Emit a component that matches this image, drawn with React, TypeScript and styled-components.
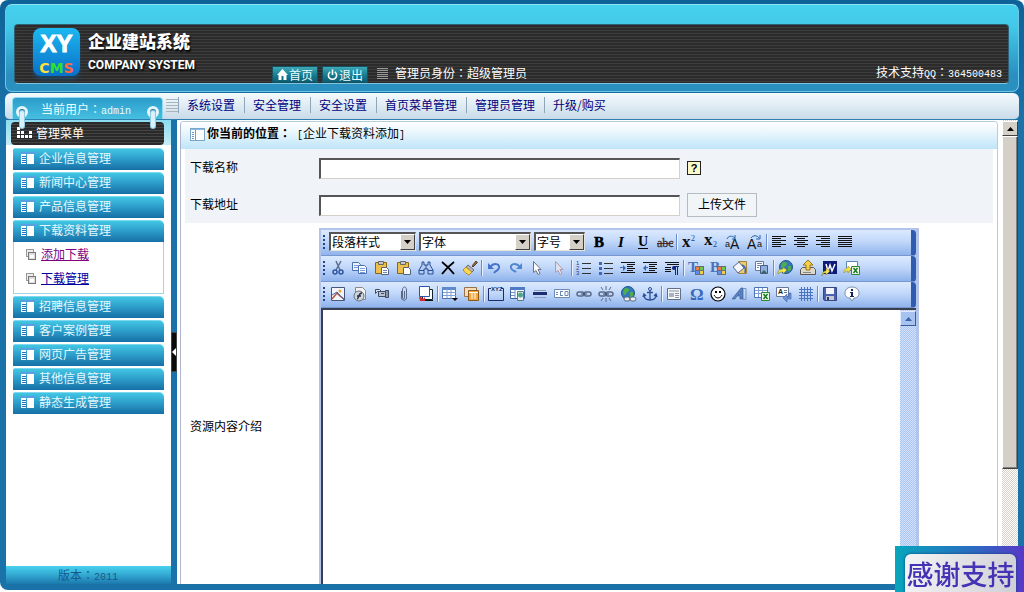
import React from "react";
import styled, { createGlobalStyle, css } from "styled-components";

const GlobalStyle = createGlobalStyle`
  * { box-sizing: border-box; }
  body {
    margin: 0;
    background: #fff;
    font: 12px/16px "Noto Sans CJK SC", sans-serif;
    color: #000;
  }
  button, input, select { font: inherit; color: inherit; }
`;

/* ---------- frame ---------- */

const Page = styled.div`
  display: flex;
  flex-direction: column;
  height: 100vh;
  padding-bottom: 2px;
`;

const Frame = styled.div`
  flex: 1;
  min-height: 0;
  display: flex;
  flex-direction: column;
  padding: 4px 5px 6px;
  border-radius: 8px;
  background: linear-gradient(#0e6298, #1a72a8 120px);
`;

const Header = styled.header`
  height: 88px;
  padding: 19px 9px 8px 8px;
  border: 1px solid #6cc6e6;
  border-top-color: #8fe2f4;
  border-radius: 7px;
  background: linear-gradient(#45d1ee, #43c8e8 22px, #2a8fc0 70px, #2a90bf);
`;

const Banner = styled.div`
  display: flex;
  height: 60px;
  padding: 0 6px 0 18px;
  border: 1px solid #2f5f72;
  border-bottom-color: #7cc6e2;
  border-radius: 4px;
  background: repeating-linear-gradient(#2b2b2b 0 2px, #3d3d3d 2px 3px);
  color: #fff;
`;

const Logo = styled.div`
  display: flex;
  flex-direction: column;
  align-items: center;
  width: 47px;
  height: 48px;
  margin-top: 3px;
  border-radius: 8px;
  background: linear-gradient(#1cb8f0, #0a6fc8);
  box-shadow: 0 4px 4px rgba(20, 90, 140, 0.5);
`;

const LogoTop = styled.span`
  font: 900 24px/32px "Liberation Sans", sans-serif;
  -webkit-text-stroke: 1px #fff;
`;

const LogoLetter = styled.span<{ $color: string }>`
  font: bold 14px/14px "DejaVu Sans", sans-serif;
  color: ${(p) => p.$color};
`;

const Brand = styled.div`
  width: 192px;
  padding: 5px 0 0 8px;
  white-space: nowrap;
  text-shadow: 1px 2px 2px #000;
`;

const BrandName = styled.div`
  font-size: 17px;
  font-weight: 900;
  line-height: 22px;
`;

const BrandSub = styled.div`
  font: bold 12px/26px Roboto, sans-serif;
`;

const Status = styled.div`
  flex: 1;
  display: flex;
  align-items: flex-end;
  gap: 4px;
`;

const HeadButton = styled.button`
  display: flex;
  align-items: center;
  gap: 1px;
  width: 46px;
  height: 17px;
  padding: 0 4px;
  border: 1px solid #17505e;
  background: linear-gradient(#3da9b8, #14788c 60%, #0c5c72);
  color: #e8fbff;
  white-space: nowrap;
`;

const Role = styled.span`
  display: flex;
  align-items: center;
  gap: 7px;
  margin-left: 5px;
  padding-bottom: 2px;
`;

const Support = styled.span`
  align-self: flex-end;
`;

const Latin = styled.span`
  font: 10px/16px "Liberation Mono", monospace;
`;

const Colon = styled.span`
  font-family: "Noto Sans CJK TC", sans-serif;
`;

const Nav = styled.nav`
  display: flex;
  height: 27px;
  margin-top: 1px;
  padding: 4px 0 0 7px;
  border-bottom: 1px solid #2f7fae;
  border-radius: 6px 6px 5px 5px;
  background: linear-gradient(#f4fafe, #dbe8f1 60%, #c9dae8);
`;

const UserTab = styled.div`
  position: relative;
  width: 151px;
  height: 22px;
  padding: 3px 0 0 28px;
  border: 1px solid #8fdcf0;
  border-bottom: 0;
  border-radius: 4px 4px 0 0;
  background: linear-gradient(#2b9ccb, #46bfe0);
  color: #eafcff;
`;

const Ring = styled.svg<{ $side: "left" | "right" }>`
  position: absolute;
  z-index: 1;
  top: 8px;
  ${(p) => p.$side}: 3px;
`;

const NavMark = styled.span`
  width: 12px;
  height: 14px;
  margin: 2px 0 0 3px;
  background: repeating-linear-gradient(#aab4bc 0 1px, transparent 1px 3px);
`;

const NavLink = styled.a`
  height: 16px;
  padding: 0 9px 0 8px;
  border-left: 1px solid #8ea6b8;
  color: #00007c;
  text-decoration: none;
  white-space: nowrap;
`;

const Body = styled.div`
  flex: 1;
  min-height: 0;
  display: flex;
  padding: 0 1px;
`;

/* ---------- sidebar ---------- */

const Sidebar = styled.aside`
  display: flex;
  flex-direction: column;
  width: 165px;
  background: #fff;
`;

const SideHead = styled.h2`
  margin: 0;
  padding: 2px 7px 0 5px;
  background: linear-gradient(#8adcf0, #c8ecf7);
  font-size: 12px;
  font-weight: normal;
`;

const SideTitle = styled.span`
  display: flex;
  align-items: center;
  gap: 4px;
  height: 23px;
  padding: 0 0 2px 6px;
  border-radius: 4px;
  background: repeating-linear-gradient(#2a2a2a 0 2px, #444 2px 3px);
  color: #fff;
`;

const Menu = styled.div`
  flex: 1;
  display: flex;
  flex-direction: column;
  gap: 2px;
  padding: 3px 7px 0;
`;

const MenuItem = styled.button`
  display: flex;
  align-items: center;
  gap: 4px;
  height: 22px;
  padding: 0 8px 3px;
  border: 0;
  border-top: 1px solid #7fd8ec;
  border-radius: 2px 5px 0 0;
  background: linear-gradient(#42c6e4, #2d9fcb 45%, #166fa6);
  color: #e2f8ff;
`;

const SubMenu = styled.div`
  display: flex;
  flex-direction: column;
  gap: 8px;
  height: 52px;
  margin-top: -2px;
  padding: 4px 0 0 12px;
  border: 1px solid #9ad6e8;
  border-top: 0;
`;

const SubItem = styled.span`
  display: flex;
  align-items: center;
  gap: 5px;
`;

const SubLink = styled.a<{ $visited?: boolean }>`
  color: ${(p) => (p.$visited ? "#800080" : "#0000a0")};
`;

const Version = styled.footer`
  height: 18px;
  padding-left: 52px;
  background: linear-gradient(#48d2ef, #2f9fcb 60%, #1b78ae);
  color: #155a88;
  line-height: 18px;
`;

const Splitter = styled.div`
  display: flex;
  align-items: center;
  width: 6px;
`;

const SplitHandle = styled.button`
  display: grid;
  place-items: center;
  width: 6px;
  height: 40px;
  padding: 0;
  border: 1px solid #444;
  background: #0a0a0a;
`;

/* ---------- content ---------- */

const Content = styled.main`
  flex: 1;
  min-width: 0;
  display: flex;
  background: #fff;
`;

const Panel = styled.section`
  flex: 1;
  min-width: 0;
  margin: 1px 4px 0 3px;
  overflow: hidden;
  border: 1px solid #b4cfdc;
  border-left-color: #b0b4cc;
  border-bottom: 0;
  border-radius: 4px 4px 0 0;
`;

const PanelHead = styled.h1`
  display: flex;
  align-items: center;
  gap: 2px;
  height: 27px;
  margin: 0;
  padding: 0 9px 3px;
  background: linear-gradient(#fff, #e8f6fd 40%, #bfe4f8);
  font-size: 12px;
`;

const Place = styled.span`
  margin-left: 6px;
  font-weight: normal;
`;

const Row = styled.div<{ $editor?: boolean }>`
  display: flex;
  align-items: center;
  gap: 7px;
  height: 37px;
  margin: 0 4px;
  padding: 1px 0 0 5px;
  background: #f0f4f8;
  ${(p) =>
    p.$editor &&
    css`
      height: auto;
      padding-top: 5px;
      background: #fff;
    `}
`;

const Label = styled.label`
  width: 122px;
  padding-bottom: 2px;
`;

const TextInput = styled.input`
  width: 361px;
  height: 21px;
  border: 1px solid;
  border-width: 2px 1px 1px 2px;
  border-color: #555 #d4d0c8 #d4d0c8 #555;
  background: #fff;
`;

const Help = styled.button`
  width: 14px;
  height: 14px;
  padding: 0;
  border: 1px solid #222;
  background: #fdf8c8;
  font: bold 11px/12px "Liberation Sans", sans-serif;
`;

const Upload = styled.button`
  width: 70px;
  height: 24px;
  padding: 0 0 2px;
  border: 1px solid #b4bcc2;
  background: #f2f5f8;
`;

/* ---------- scrollbars ---------- */

type Tone = { $blue?: boolean };

const Track = styled.div<Tone>`
  display: flex;
  flex-direction: column;
  width: 16px;
  padding-top: 1px;
  background: ${(p) =>
    p.$blue
      ? "repeating-conic-gradient(#a9c4f2 0 25%, #d4e2fa 0 50%) 0 0 / 2px 2px"
      : "repeating-conic-gradient(#d4d0c8 0 25%, #fff 0 50%) 0 0 / 2px 2px"};
`;

const ScrollButton = styled.button<Tone>`
  display: grid;
  place-items: center;
  width: 16px;
  height: 15px;
  padding: 0;
  border: 1px solid;
  border-color: ${(p) => (p.$blue ? "#e0ebfd #3c5a9c #3c5a9c #e0ebfd" : "#fff #404040 #404040 #fff")};
  background: ${(p) => (p.$blue ? "#a6c3f2" : "#d4d0c8")};
`;

const Thumb = styled.div`
  width: 16px;
  height: 72%;
  border: 1px solid;
  border-color: #fff #404040 #404040 #fff;
  background: #d4d0c8;
  box-shadow: inset -1px -1px #808080;
`;

/* ---------- editor ---------- */

const Editor = styled.div`
  display: flex;
  flex-direction: column;
  width: 600px;
  height: 398px;
  padding: 2px 3px 0 2px;
  background: #b3c4ea;
`;

const Toolbar = styled.div`
  display: flex;
  align-items: center;
  height: 26px;
  padding: 0 0 2px 1px;
  border-right: 5px solid #2f5cae;
  border-bottom: 1px solid #7896cf;
  border-radius: 0 4px 4px 0;
  background: linear-gradient(#dbe9fe, #c2d8fa 45%, #8fb3ec);
`;

const Grip = styled.span<{ $wide?: boolean }>`
  width: 2px;
  height: 14px;
  margin-left: 1px;
  margin-right: ${(p) => (p.$wide ? 4 : 2)}px;
  background: repeating-linear-gradient(#27418a 0 2px, transparent 2px 4px);
`;

const Divider = styled.span`
  width: 2px;
  height: 16px;
  border-left: 1px solid #6a8ccb;
  border-right: 1px solid #eef4ff;
`;

const Tool = styled.button`
  display: grid;
  place-items: center;
  width: 22px;
  height: 22px;
  padding: 0;
  border: 0;
  background: none;
`;

const SelectBox = styled.span<{ $w: number }>`
  position: relative;
  display: flex;
  width: ${(p) => p.$w}px;
  margin-right: 3px;
`;

const Select = styled.select`
  appearance: none;
  width: 100%;
  height: 19px;
  padding: 0 0 0 1px;
  border: 1px solid;
  border-width: 2px 1px 1px 2px;
  border-color: #555 #e6e2dc #e6e2dc #555;
  border-radius: 0;
  background: #fff;
  line-height: 16px;
`;

const SelectArrow = styled.span`
  position: absolute;
  top: 2px;
  right: 1px;
  display: grid;
  place-items: center;
  width: 15px;
  height: 16px;
  border: 1px solid;
  border-color: #fff #404040 #404040 #fff;
  background: #d4d0c8;
  pointer-events: none;
`;

const EditPane = styled.div`
  flex: 1;
  display: flex;
  border: solid #3a3f50;
  border-width: 2px 0 0 2px;
  background: #fff;
`;

const EditArea = styled.textarea`
  flex: 1;
  border: 0;
  padding: 0;
  resize: none;
  overflow: hidden;
  background: #fff;
`;

/* ---------- badge ---------- */

const Badge = styled.div`
  position: fixed;
  right: 0;
  bottom: 0;
  width: 129px;
  height: 46px;
  padding: 8px 8px 0 10px;
  background: linear-gradient(90deg, #08a6bc, #2a6cc0 60%, #5838c8);
`;

const BadgeText = styled.div`
  height: 38px;
  border-radius: 6px 6px 0 0;
  background: linear-gradient(100deg, #f4f4f6, #cfcfd6);
  box-shadow: 0 0 3px #123c78;
  color: #4433b4;
  font-size: 27px;
  font-weight: 500;
  line-height: 39px;
  text-align: center;
  white-space: nowrap;
`;

/* ---------- drawings ---------- */

const Glyph = styled.svg`
  overflow: visible;
`;

const Icon = ({ children }: { children: React.ReactNode }) => (
  <Glyph width="16" height="16" viewBox="0 0 16 16" fill="none" aria-hidden="true">
    {children}
  </Glyph>
);

const Arrow = ({ down, color = "#000" }: { down?: boolean; color?: string }) => (
  <svg width="7" height="4" viewBox="0 0 7 4" aria-hidden="true">
    <path d={down ? "M0 0h7L3.5 4z" : "M0 4h7L3.5 0z"} fill={color} />
  </svg>
);

const PageIcon = () => (
  <svg width="14" height="12" viewBox="0 0 14 12" shapeRendering="crispEdges" aria-hidden="true">
    <path d="M0 0h14v2H0z" fill="#5a9fe0" />
    <path d="M0 2h5v10H0zM6 2h7v10H6z" fill="#fff" />
    <path d="M1 4.500h4M1 6.500h4M1 8.500h4M1 10.500h4" stroke="#2a74b8" />
  </svg>
);

const HeadIcon = () => (
  <svg width="15" height="13" viewBox="0 0 15 13" shapeRendering="crispEdges" aria-hidden="true">
    <path d="M.5 .5h14v12H.5z" fill="#fff" stroke="#7aa4c8" />
    <path d="M1 1h13v1H1z" fill="#8abbe6" />
    <path d="M5.500 2v10M2 4.500h2M2 6.500h2M2 8.500h2M2 10.500h2" stroke="#6a9cc8" />
  </svg>
);

const CopyIcon = () => (
  <svg width="10" height="11" viewBox="0 0 10 11" shapeRendering="crispEdges" aria-hidden="true">
    <path d="M.5 .5h7v7h-7z" fill="#eee" stroke="#999" />
    <path d="M2.500 3.500h7v7h-7z" fill="#ddd" stroke="#777" />
    <path d="M4 6h4v3H4z" fill="#fff" />
  </svg>
);

const RingDrawing = ({ side }: { side: "left" | "right" }) => (
  <Ring $side={side} width="12" height="24" viewBox="0 0 12 24" aria-hidden="true">
    <circle cx="6" cy="6" r="4.500" fill="#1f6f9c" stroke="#e4f5fb" strokeWidth="3" />
    <path d="M6 7v13" stroke="#8fcbe6" strokeWidth="6" strokeLinecap="round" />
    <path d="M6 7v13" stroke="#d9f1fa" strokeWidth="4" strokeLinecap="round" />
  </Ring>
);

const serif = '"Liberation Serif", serif';
const sans = '"Liberation Sans", sans-serif';
const navy = "#1c3f8c";

const lines = (rows: string) => <path d={rows} stroke="#111" shapeRendering="crispEdges" />;
const clipboard = (
  <>
    <path d="M1.500 2.500h11v11h-11z" fill="#ecc04a" stroke="#8a6418" />
    <path d="M4.500 1.500h5v3h-5z" fill="#c8c8c8" stroke="#666" />
    <path d="M7.500 7.500h5l2 2v5h-7z" fill="#fff" stroke="#55627f" />
  </>
);
const excel = (
  <>
    <path d="M7.500 6.500h8v8h-8z" fill="#e9f7e4" stroke="#2b8a34" />
    <path d="M9.500 8l4 5M13.500 8l-4 5" stroke="#1e7a28" strokeWidth="1.500" />
  </>
);
const swatch = (
  <g shapeRendering="crispEdges">
    <path d="M7 6h9v9H7z" fill="#6e6a6e" />
    <path d="M8 7h3v3H8z" fill="#ee7a50" />
    <path d="M12 7h3v3h-3z" fill="#6cc850" />
    <path d="M8 11h3v3H8z" fill="#5a8ef0" />
    <path d="M12 11h3v3h-3z" fill="#f0d04a" />
  </g>
);
const chain = (
  <>
    <rect x="1" y="6" width="7" height="4" rx="2" stroke="#5a6a88" strokeWidth="1.500" />
    <rect x="8" y="6" width="7" height="4" rx="2" stroke="#5a6a88" strokeWidth="1.500" />
    <path d="M5 8h6" stroke="#33415e" />
  </>
);
const globe = (
  <>
    <circle cx="8" cy="7" r="6.500" fill="#3278c0" stroke="#1f5484" />
    <path d="M4 3c2-2 5-1 5 1S6 6 6 8s-2 1-3-1zM10 6c2-1 4 0 3 3s-3 3-3 1z" fill="#4fae4a" />
  </>
);

const icons: Record<string, React.ReactNode> = {
  粗体: <text x="3" y="13" fontFamily={serif} fontSize="15" fontWeight="900" fill="#000" stroke="#000" strokeWidth=".5">B</text>,
  斜体: <text x="5" y="13" fontFamily={serif} fontSize="15" fontWeight="bold" fontStyle="italic" fill="#000">I</text>,
  下划线: (
    <>
      <text x="3" y="12" fontFamily={serif} fontSize="14" fontWeight="bold" fill="#000">U</text>
      <path d="M3 14.500h10" stroke="#000" />
    </>
  ),
  删除线: (
    <>
      <text x="0" y="13" fontFamily={serif} fontSize="12" fill="#333" stroke="#333" strokeWidth=".3">abc</text>
      <path d="M0 9.500h16" stroke="#5a2020" />
    </>
  ),
  上标: (
    <>
      <text x="1" y="13" fontFamily={serif} fontSize="17" fontWeight="bold" fill="#111">x</text>
      <text x="10" y="7" fontFamily={serif} fontSize="8" fill={navy}>2</text>
    </>
  ),
  下标: (
    <>
      <text x="1" y="11" fontFamily={serif} fontSize="17" fontWeight="bold" fill="#111">x</text>
      <text x="10" y="13" fontFamily={serif} fontSize="8" fill={navy}>2</text>
    </>
  ),
  大写: (
    <>
      <text x="0" y="13" fontFamily={sans} fontSize="9" fill="#111">a</text>
      <text x="5" y="15" fontFamily={sans} fontSize="14" fill="#111">A</text>
      <path d="M2 5c1-3 5-4 8-1M10 1v4H7" stroke="#2462a8" />
    </>
  ),
  小写: (
    <>
      <text x="0" y="15" fontFamily={sans} fontSize="14" fill="#111">A</text>
      <text x="10" y="13" fontFamily={sans} fontSize="9" fill="#111">a</text>
      <path d="M4 4c2-3 6-3 8 0M13 1v4H9" stroke="#2462a8" />
    </>
  ),
  左对齐: lines("M1 2.500h14M1 4.500h9M1 6.500h14M1 8.500h9M1 10.500h14M1 12.500h9"),
  居中: lines("M1 2.500h14M4 4.500h8M1 6.500h14M4 8.500h8M1 10.500h14M4 12.500h8"),
  右对齐: lines("M1 2.500h14M6 4.500h9M1 6.500h14M6 8.500h9M1 10.500h14M6 12.500h9"),
  两端对齐: lines("M1 2.500h14M1 4.500h14M1 6.500h14M1 8.500h14M1 10.500h14M1 12.500h14"),

  剪切: (
    <>
      <path d="M6 1l4 9M11 1L6 10" stroke="#5c6f92" strokeWidth="1.500" />
      <circle cx="5" cy="12" r="2" stroke="#2f55a4" strokeWidth="1.500" />
      <circle cx="11" cy="12" r="2" stroke="#2f55a4" strokeWidth="1.500" />
    </>
  ),
  复制: (
    <>
      <path d="M.5 2.500h6l2 2v6h-8z" fill="#eef4ff" stroke="#4a6eb4" />
      <path d="M6.500 5.500h6l2 2v6h-8z" fill="#fff" stroke="#4a6eb4" />
      <path d="M2 5.500h4M2 7.500h4M8 8.500h5M8 10.500h5M8 12.500h5" stroke="#7c9cd6" />
    </>
  ),
  粘贴: (
    <>
      {clipboard}
      <path d="M9 10.500h4M9 12.500h4" stroke="#7088b8" />
    </>
  ),
  粘贴文本: clipboard,
  查找: (
    <>
      <path d="M4 2h2v3h4V2h2v3l3 5v4h-5v-5H6v5H1v-4l3-5z" fill="#b7cdf0" stroke="#274f98" />
      <path d="M1 10.500h5M10 10.500h5M8 5v4" stroke="#274f98" />
    </>
  ),
  删除: <path d="M2 2c4 3 8 7 12 12M14 2C10 5 5 10 2 14" stroke="#000" strokeWidth="1.800" />,
  格式刷: (
    <>
      <path d="M10 6l4-5 1.500 1.500L11 7z" fill="#8a6a4a" stroke="#5a4028" />
      <path d="M6 5l6 5-2 2-6-5z" fill="#b9b9c4" stroke="#6a6a78" />
      <path d="M4 7l6 5-3 3c-2-1-5-3-6-5z" fill="#f7d65a" stroke="#b88a20" />
    </>
  ),
  撤销: (
    <>
      <path d="M4 7c4-5 10-3 9 1-1 3-4 3-5 5" stroke="#4574c8" strokeWidth="2" />
      <path d="M2 3v6h6z" fill="#4574c8" />
    </>
  ),
  重做: (
    <>
      <path d="M12 7C8 2 2 4 3 8c1 3 4 3 5 4" stroke="#4f86d0" strokeWidth="2" />
      <path d="M14 3v6H8z" fill="#4f86d0" />
    </>
  ),
  全选: <path d="M3.500 1.500v11l2.500-2 2 4 2-1-2-4h3z" fill="#fff" stroke="#6b7486" />,
  取消选择: <path d="M3.500 1.500v11l2.500-2 2 4 2-1-2-4h3z" fill="#dde2f2" stroke="#b39aa8" />,
  编号: (
    <>
      <path d="M6 3.500h9M6 8.500h9M6 13.500h9" stroke="#333" />
      <text x="0" y="5" fontFamily={sans} fontSize="6" fill={navy}>1</text>
      <text x="0" y="10" fontFamily={sans} fontSize="6" fill={navy}>2</text>
      <text x="0" y="15" fontFamily={sans} fontSize="6" fill={navy}>3</text>
    </>
  ),
  项目符号: (
    <>
      <path d="M6 3.500h9M6 8.500h9M6 13.500h9" stroke="#333" />
      <path d="M1 2h3v3H1zM1 7h3v3H1zM1 12h3v3H1z" fill="#3b68b8" />
    </>
  ),
  增加缩进: (
    <>
      {lines("M1 2.500h14M7 4.500h8M7 6.500h6M7 8.500h8M7 10.500h6M1 12.500h14")}
      <path d="M0 7h3V5l3 3-3 3V8H0z" fill="#3b68b8" />
    </>
  ),
  减少缩进: (
    <>
      {lines("M1 2.500h14M7 4.500h8M7 6.500h6M7 8.500h8M7 10.500h6M1 12.500h14")}
      <path d="M6 7H4V5L1 8l3 3V8h2z" fill="#3b68b8" />
    </>
  ),
  段落: (
    <>
      {lines("M1 2.500h14M3 4.500h12M1 7.500h6M1 9.500h6M1 11.500h6")}
      <path d="M13.500 6v9M11.500 6v9M10 6.500h5" stroke="#16247c" />
      <circle cx="10" cy="8" r="2" fill="#16247c" />
    </>
  ),
  文字颜色: (
    <>
      <text x="0" y="12" fontFamily={serif} fontSize="15" fontWeight="bold" fill="#4a72b8">T</text>
      {swatch}
    </>
  ),
  背景颜色: (
    <>
      <text x="0" y="12" fontFamily={serif} fontSize="15" fontWeight="bold" fill="#4a72b8">B</text>
      {swatch}
    </>
  ),
  填充: (
    <>
      <path d="M6.500 1.500h8v12h-8z" fill="#f0cc68" stroke="#9f8440" />
      <path d="M1 7l6-5 5 6-6 5z" fill="#f4f6fa" stroke="#5a6a88" />
      <path d="M10 5c3 1 4 4 3 8" stroke="#3b68b8" strokeWidth="1.500" />
    </>
  ),
  图片背景: (
    <>
      <path d="M1.500 1.500h8v9h-8z" fill="#fff" stroke="#6a7896" />
      <path d="M6.500 5.500h7v8h-7z" fill="#8fb0de" stroke="#455c88" />
      <path d="M3 3.500h5M3 5.500h4M3 7.500h2" stroke="#6f86b4" />
      <path d="M7 13l3-3 3 3z" fill="#3a6a54" />
    </>
  ),
  网页: (
    <>
      {globe}
      <path d="M0 14c0-4 2-5 5-5V7l4 3-4 4v-2c-2 0-3 0-5 2z" fill="#f6e84a" stroke="#6a6a20" strokeWidth=".5" />
    </>
  ),
  上传: (
    <>
      <path d="M.5 9.500l2-2h11l2 2v5H.5z" fill="#dcd8cc" stroke="#555" />
      <path d="M8 0l5 5h-3v5H6V5H3z" fill="#f7cf4a" stroke="#9a7410" />
      <path d="M3 12.500h8" stroke="#888" />
    </>
  ),
  导入文档: (
    <>
      <path d="M1 1h14v13H1z" fill="#0d1a78" />
      <path d="M4 4l2 7 2-6 2 6 3-7" stroke="#fff" strokeWidth="1.500" />
      <path d="M0 16c0-4 2-5 4-5V8l4 3-4 4v-2c-2 0-3 0-4 3z" fill="#f6e84a" stroke="#6a6a20" strokeWidth=".5" />
    </>
  ),
  导入表格: (
    <>
      <path d="M2.500 1.500h11v9h-11z" fill="#fff" stroke="#5c86b4" />
      {excel}
      <path d="M0 13c0-4 2-5 4-5V6l3 3-3 4v-2c-2 0-3 0-4 2z" fill="#f6e84a" stroke="#8a8420" strokeWidth=".5" />
    </>
  ),

  图片: (
    <>
      <path d="M1.500 1.500h13v13h-13z" fill="#f2f6fc" stroke="#46577c" />
      <path d="M2 13l5-6 3 3 4 3" stroke="#b8543c" strokeWidth="1.500" />
      <circle cx="10" cy="5" r="1.500" fill="#e8a040" />
      <path d="M2 9l5-3 7 8" stroke="#3f68ac" />
    </>
  ),
  动画: (
    <>
      <path d="M3.500 1.500h7l3 3v9h-10z" fill="#f3f3f3" stroke="#888" />
      <circle cx="7" cy="10" r="5" fill="#d0d4dc" stroke="#68707e" />
      <path d="M5 13c2 0 1-6 5-6M5 10h4" stroke="#2b3444" strokeWidth="1.500" />
    </>
  ),
  视频: (
    <>
      <path d="M4.500 5.500h7v5h-7z" fill="#b8c2d2" stroke="#404c62" />
      <path d="M1.500 3.500h4l2 2h-4l-2 2z" fill="#dde3ee" stroke="#404c62" />
      <path d="M7 7.500h3" stroke="#404c62" />
      <path d="M11.500 4.500h3v7h-3z" fill="#8a96aa" stroke="#404c62" />
    </>
  ),
  附件: <path d="M5.500 5v7c0 3 5 3 5 0V4c0-4-4-4-4 0v8c0 1 2 1 2 0V5" stroke="#5a6a88" />,
  插入层: (
    <>
      <path d="M4.500 3.500h10v10h-10z" fill="#fff" stroke="#123" />
      <path d="M1.500 .5h10v10h-10z" fill="#fff" stroke="#2b56a8" />
      <path d="M1 11h2l2 2 2-2v4H2z" fill="#d42a2a" />
      <path d="M7 14.500h8" stroke="#111" />
    </>
  ),
  表格: (
    <>
      <path d="M.5 1.500h13v11H.5z" fill="#fff" stroke="#4c73b4" />
      <path d="M0 1h14v3H0z" fill="#5c88cc" />
      <path d="M1 6.500h13M1 9.500h13M5 3v9M9 3v9" stroke="#7ea0d8" />
      <path d="M10 12h6l-3 3z" fill="#000" />
    </>
  ),
  表格属性: (
    <>
      <path d="M.5 1.500h12v9H.5z" fill="#f6dcb8" stroke="#9a7448" />
      <path d="M4.500 4.500h10v10h-10z" fill="#f9a838" stroke="#8a5a1c" />
      <path d="M8 6v7M11 6v7M5 6.500h9" stroke="#fff" />
    </>
  ),
  容器: (
    <>
      <path d="M3 2.500H.5v12h15v-12H13" stroke="#1b2d66" />
      <text x="3" y="5" fontFamily={sans} fontSize="6" fontWeight="bold" fill="#1b2d66">XYZ</text>
    </>
  ),
  框架: (
    <>
      <path d="M.5 1.500h14v11H.5z" fill="#fff" stroke="#3f62a4" />
      <path d="M0 1h15v3H0z" fill="#4f7ac4" />
      <path d="M5 4v8M1 6.500h4M1 9.500h4" stroke="#6f92cf" />
      <path d="M7.500 5.500h6v9h-6z" fill="#e8f0f0" stroke="#5a7a84" />
      <circle cx="10.500" cy="9" r="2.500" fill="#4fa78a" />
    </>
  ),
  水平线: (
    <>
      <path d="M2 4.500h12M2 11.500h12" stroke="#8c9ab8" />
      <path d="M1 6h14v3H1z" fill="#1d2f6c" />
    </>
  ),
  输入框: (
    <>
      <path d="M.5 3.500h15v8H.5z" fill="#fff" stroke="#6c8ab8" />
      <path d="M2 6.500h2M2 8.500h2M6.500 6v3M6 5.500h3M6 9.500h3M11 5.500h3v4h-3z" stroke="#6c8ab8" />
    </>
  ),
  链接: chain,
  取消链接: (
    <>
      {chain}
      <path d="M8 0v4M8 12v4M3 1l2 3M13 1l-2 3M3 15l2-3M13 15l-2-3" stroke="#5a6a88" />
    </>
  ),
  网址: (
    <>
      {globe}
      <rect x="4" y="11" width="6" height="4" rx="2" fill="#eee" stroke="#5a6a88" />
      <rect x="10" y="11" width="6" height="4" rx="2" fill="#eee" stroke="#5a6a88" />
    </>
  ),
  锚点: (
    <>
      <circle cx="8" cy="3" r="1.500" stroke="#2b4f98" />
      <path d="M8 4v10M5 6.500h6M2 9c0 4 3 5 6 5s6-1 6-5M1 11l1-3 2 2M15 11l-1-3-2 2" stroke="#2b4f98" strokeWidth="1.300" />
    </>
  ),
  栏目: (
    <>
      <path d="M1.500 2.500h13v11h-13z" fill="#f4f6f8" stroke="#62708a" />
      <path d="M3 5h10M9 7.500h4M9 9.500h4M9 11.500h4" stroke="#8a94a6" />
      <path d="M3 7h5v4H3z" fill="#a9b2c0" />
    </>
  ),
  特殊符号: <text x="2" y="14" fontFamily={serif} fontSize="17" fontWeight="bold" fill="#3a68ba">Ω</text>,
  表情: (
    <>
      <circle cx="8" cy="8" r="7" fill="#fff" stroke="#000" strokeWidth="1.200" />
      <path d="M5 5h2v2H5zM9 5h2v2H9z" fill="#000" />
      <path d="M4 9c2 4 6 4 8 0" stroke="#000" />
    </>
  ),
  艺术字: (
    <>
      <path d="M0 13L9 2h2v11H8v-3H5l-2 3zM6 8h2V5z" fill="#5a84c4" stroke="#34558f" strokeWidth=".6" fillRule="evenodd" />
      <path d="M11 2.500h3v11h-3" stroke="#7a93bc" />
    </>
  ),
  电子表格: (
    <>
      <path d="M.5 1.500h13v10H.5z" fill="#fff" stroke="#4c73b4" />
      <path d="M1 4.500h12M1 7.500h12M4.500 2v9M8.500 2v9" stroke="#7ea0d8" />
      {excel}
    </>
  ),
  分页: (
    <>
      <path d="M.5 1.500h12v9H.5z" fill="#fff" stroke="#68789a" />
      <text x="2" y="8" fontFamily={sans} fontSize="7" fontWeight="bold" fill="#222">A</text>
      <path d="M8 4.500h3M8 6.500h3" stroke="#68789a" />
      <path d="M15 7v6h-4v3l-4-4 4-4v3h2V7z" fill="#6a92da" stroke="#3f62a4" strokeWidth=".6" />
    </>
  ),
  网格: (
    <path
      d="M1 3.500h14M1 6.500h14M1 9.500h14M1 12.500h14M3.500 1v14M6.500 1v14M9.500 1v14M12.500 1v14"
      stroke="#4a74c0"
      shapeRendering="crispEdges"
    />
  ),
  保存: (
    <>
      <path d="M1.500 1.500h13v13h-12l-1-1z" fill="#4a5fb0" stroke="#38487f" />
      <path d="M4 2h8v6H4z" fill="#f2f4fa" />
      <path d="M4 10h8v4H4z" fill="#c4c8d4" />
      <path d="M5 11h2v3H5z" fill="#28386f" />
    </>
  ),
  关于: (
    <>
      <path d="M8 1c9 0 9 11 2 11l-2 3-2-3C-1 12-1 1 8 1z" fill="#fff" stroke="#7d8da8" />
      <path d="M7 3h2v2H7zM6 6h3v4h1v1H6v-1h1V7H6z" fill="#17275e" />
    </>
  ),
};

const toolRows: string[][][] = [
  [
    ["粗体", "斜体", "下划线", "删除线"],
    ["上标", "下标", "大写", "小写"],
    ["左对齐", "居中", "右对齐", "两端对齐"],
  ],
  [
    ["剪切", "复制", "粘贴", "粘贴文本", "查找", "删除", "格式刷"],
    ["撤销", "重做", "全选", "取消选择"],
    ["编号", "项目符号", "增加缩进", "减少缩进", "段落"],
    ["文字颜色", "背景颜色", "填充", "图片背景"],
    ["网页", "上传", "导入文档", "导入表格"],
  ],
  [
    ["图片", "动画", "视频", "附件", "插入层"],
    ["表格", "表格属性"],
    ["容器", "框架", "水平线", "输入框", "链接", "取消链接", "网址", "锚点"],
    ["栏目", "特殊符号", "表情", "艺术字", "电子表格", "分页", "网格"],
    ["保存", "关于"],
  ],
];

const Tools = ({ groups }: { groups: string[][] }) => (
  <>
    {groups.map((group, i) => (
      <React.Fragment key={i}>
        {i > 0 && <Divider />}
        {group.map((name) => (
          <Tool key={name} type="button" aria-label={name}>
            <Icon>{icons[name]}</Icon>
          </Tool>
        ))}
      </React.Fragment>
    ))}
  </>
);

const DropDown = ({ text, width }: { text: string; width: number }) => (
  <SelectBox $w={width}>
    <Select aria-label={text}>
      <option>{text}</option>
    </Select>
    <SelectArrow>
      <Arrow down />
    </SelectArrow>
  </SelectBox>
);

const navLinks = ["系统设置", "安全管理", "安全设置", "首页菜单管理", "管理员管理", "升级/购买"];
const menuTop = ["企业信息管理", "新闻中心管理", "产品信息管理", "下载资料管理"];
const menuBottom = ["招聘信息管理", "客户案例管理", "网页广告管理", "其他信息管理", "静态生成管理"];

const MenuButton = ({ text }: { text: string }) => (
  <MenuItem type="button">
    <PageIcon />
    {text}
  </MenuItem>
);

export default function App() {
  return (
    <Page>
      <GlobalStyle />
      <Frame>
        <Header>
          <Banner>
            <Logo>
              <LogoTop>XY</LogoTop>
              <span>
                <LogoLetter $color="#ffe03a">C</LogoLetter>
                <LogoLetter $color="#2fe02f">M</LogoLetter>
                <LogoLetter $color="#ff6a3c">S</LogoLetter>
              </span>
            </Logo>
            <Brand>
              <BrandName>企业建站系统</BrandName>
              <BrandSub>COMPANY SYSTEM</BrandSub>
            </Brand>
            <Status>
              <HeadButton type="button">
                <svg width="11" height="11" viewBox="0 0 11 11" aria-hidden="true">
                  <path d="M5.500 0L11 6H9.500v5h-3V7h-2v4h-3V6H0z" fill="#fff" />
                </svg>
                首页
              </HeadButton>
              <HeadButton type="button">
                <svg width="12" height="12" viewBox="0 0 12 12" fill="none" aria-hidden="true">
                  <path d="M3.500 2.500a4.500 4.500 0 1 0 5 0M6 0v6" stroke="#fff" strokeWidth="1.700" />
                </svg>
                退出
              </HeadButton>
              <Role>
                <svg width="11" height="11" viewBox="0 0 11 11" shapeRendering="crispEdges" aria-hidden="true">
                  <path d="M0 .5h11M0 2.500h11M0 4.500h11M0 6.500h11M0 8.500h11M0 10.500h11" stroke="#9a9a9a" />
                </svg>
                <span>
                  管理员身份<Colon>：</Colon>超级管理员
                </span>
              </Role>
            </Status>
            <Support>
              技术支持<Latin>QQ</Latin>
              <Colon>：</Colon>
              <Latin>364500483</Latin>
            </Support>
          </Banner>
        </Header>

        <Nav>
          <UserTab>
            当前用户<Colon>：</Colon>
            <Latin>admin</Latin>
            <RingDrawing side="left" />
            <RingDrawing side="right" />
          </UserTab>
          <NavMark />
          {navLinks.map((text) => (
            <NavLink key={text} href="#">
              {text}
            </NavLink>
          ))}
        </Nav>

        <Body>
          <Sidebar>
            <SideHead>
              <SideTitle>
                <svg width="15" height="11" viewBox="0 0 15 11" shapeRendering="crispEdges" aria-hidden="true">
                  <path
                    d="M0 0h3v3H0zM0 4h3v3H0zM4 4h3v3H4zM12 4h3v3h-3zM0 8h3v3H0zM4 8h3v3H4zM8 8h3v3H8zM12 8h3v3h-3z"
                    fill="#fff"
                  />
                </svg>
                管理菜单
              </SideTitle>
            </SideHead>
            <Menu>
              {menuTop.map((text) => (
                <MenuButton key={text} text={text} />
              ))}
              <SubMenu>
                <SubItem>
                  <CopyIcon />
                  <SubLink href="#" $visited>添加下载</SubLink>
                </SubItem>
                <SubItem>
                  <CopyIcon />
                  <SubLink href="#">下载管理</SubLink>
                </SubItem>
              </SubMenu>
              {menuBottom.map((text) => (
                <MenuButton key={text} text={text} />
              ))}
            </Menu>
            <Version>
              版本<Colon>：</Colon>
              <Latin>2011</Latin>
            </Version>
          </Sidebar>

          <Splitter>
            <SplitHandle type="button" aria-label="收起菜单">
              <svg width="4" height="8" viewBox="0 0 4 8" aria-hidden="true">
                <path d="M4 0v8L0 4z" fill="#fff" />
              </svg>
            </SplitHandle>
          </Splitter>

          <Content>
            <Panel>
              <PanelHead>
                <HeadIcon />
                <span>
                  你当前的位置<Colon>：</Colon>
                  <Place>
                    <Latin>[</Latin>企业下载资料添加<Latin>]</Latin>
                  </Place>
                </span>
              </PanelHead>
              <Row>
                <Label htmlFor="name">下载名称</Label>
                <TextInput id="name" />
                <Help type="button">?</Help>
              </Row>
              <Row>
                <Label htmlFor="address">下载地址</Label>
                <TextInput id="address" />
                <Upload type="button">上传文件</Upload>
              </Row>
              <Row $editor>
                <Label htmlFor="intro">资源内容介绍</Label>
                <Editor>
                  <Toolbar>
                    <Grip $wide />
                    <DropDown text="段落样式" width={87} />
                    <DropDown text="字体" width={112} />
                    <DropDown text="字号" width={51} />
                    <Tools groups={toolRows[0]} />
                  </Toolbar>
                  <Toolbar>
                    <Grip />
                    <Tools groups={toolRows[1]} />
                  </Toolbar>
                  <Toolbar>
                    <Grip />
                    <Tools groups={toolRows[2]} />
                  </Toolbar>
                  <EditPane>
                    <EditArea id="intro" />
                    <Track $blue>
                      <ScrollButton $blue type="button" aria-label="向上滚动">
                        <Arrow color="#3c62a8" />
                      </ScrollButton>
                    </Track>
                  </EditPane>
                </Editor>
              </Row>
            </Panel>
            <Track>
              <ScrollButton type="button" aria-label="页面向上滚动">
                <Arrow />
              </ScrollButton>
              <Thumb />
            </Track>
          </Content>
        </Body>
      </Frame>
      <Badge>
        <BadgeText>感谢支持</BadgeText>
      </Badge>
    </Page>
  );
}
